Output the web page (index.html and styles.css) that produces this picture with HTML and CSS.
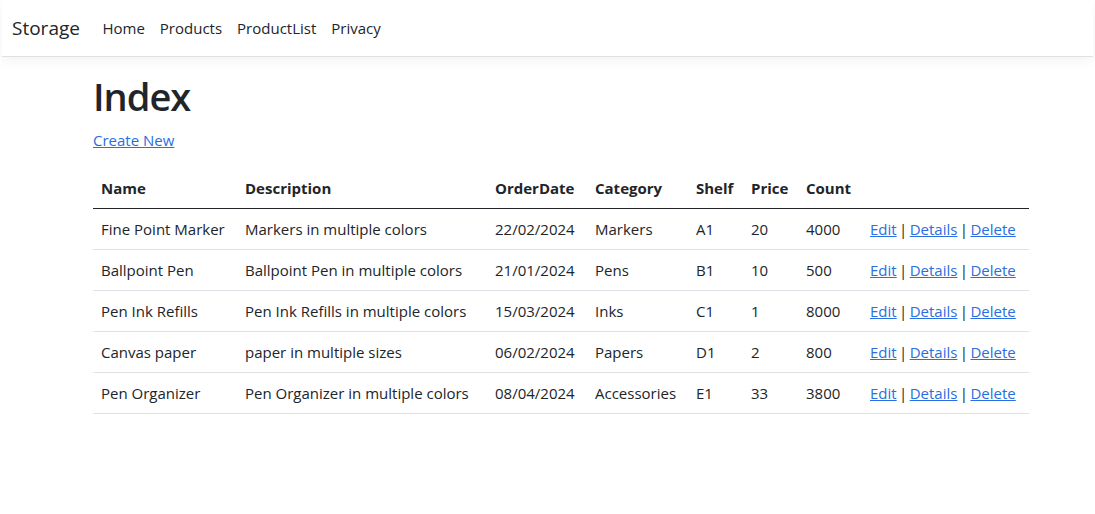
FILE: index.html
```html
<!DOCTYPE html>
<html lang="en">
<head>
<meta charset="utf-8">
<title>Index - Storage</title>
<link rel="stylesheet" href="styles.css">
</head>
<body>
<header class="navbar">
  <a class="brand" href="#">Storage</a>
  <nav class="nav">
    <a class="nav-link" href="#">Home</a>
    <a class="nav-link" href="#">Products</a>
    <a class="nav-link" href="#">ProductList</a>
    <a class="nav-link" href="#">Privacy</a>
  </nav>
</header>
<main class="container">
  <h1 class="title">Index</h1>
  <p class="create"><a href="#">Create New</a></p>
  <table class="table">
    <colgroup>
      <col class="c-name"><col class="c-desc"><col class="c-date"><col class="c-cat"><col class="c-shelf"><col class="c-price"><col class="c-count"><col class="c-act">
    </colgroup>
    <thead>
      <tr><th>Name</th><th>Description</th><th>OrderDate</th><th>Category</th><th>Shelf</th><th>Price</th><th>Count</th><th></th></tr>
    </thead>
    <tbody>
      <tr><td>Fine Point Marker</td><td>Markers in multiple colors</td><td>22/02/2024</td><td>Markers</td><td>A1</td><td>20</td><td>4000</td><td class="actions"><a href="#">Edit</a> | <a href="#">Details</a> | <a href="#">Delete</a></td></tr>
      <tr><td>Ballpoint Pen</td><td>Ballpoint Pen in multiple colors</td><td>21/01/2024</td><td>Pens</td><td>B1</td><td>10</td><td>500</td><td class="actions"><a href="#">Edit</a> | <a href="#">Details</a> | <a href="#">Delete</a></td></tr>
      <tr><td>Pen Ink Refills</td><td>Pen Ink Refills in multiple colors</td><td>15/03/2024</td><td>Inks</td><td>C1</td><td>1</td><td>8000</td><td class="actions"><a href="#">Edit</a> | <a href="#">Details</a> | <a href="#">Delete</a></td></tr>
      <tr><td>Canvas paper</td><td>paper in multiple sizes</td><td>06/02/2024</td><td>Papers</td><td>D1</td><td>2</td><td>800</td><td class="actions"><a href="#">Edit</a> | <a href="#">Details</a> | <a href="#">Delete</a></td></tr>
      <tr><td>Pen Organizer</td><td>Pen Organizer in multiple colors</td><td>08/04/2024</td><td>Accessories</td><td>E1</td><td>33</td><td>3800</td><td class="actions"><a href="#">Edit</a> | <a href="#">Details</a> | <a href="#">Delete</a></td></tr>
    </tbody>
  </table>
</main>
</body>
</html>
```
FILE: styles.css
```css
* { box-sizing: border-box; }
html, body { margin: 0; }
body {
  font-family: "Open Sans", "Noto Sans", sans-serif;
  font-size: 15px;
  line-height: 24px;
  color: #212529;
  background: #fff;
}
a { color: #2a6ee0; }

.navbar {
  display: flex;
  align-items: center;
  height: 57px;
  padding: 8px 10px;
  border-bottom: 1px solid #dee2e6;
  box-shadow: 0 4px 12px rgba(0,0,0,.05);
  margin: 0 2px 15px 2px;
}
.brand {
  font-size: 19px;
  line-height: 30px;
  color: #212529;
  text-decoration: none;
  margin-right: 15px;
}
.nav { display: flex; }
.nav-link {
  padding: 8px 7.5px;
  color: #212529;
  text-decoration: none;
}

.container {
  width: 936px;
  margin-left: 93px;
}
.title {
  font-size: 38px;
  font-weight: 600;
  letter-spacing: -1px;
  line-height: 48px;
  margin: 0 0 8px;
}
.create { margin: 0 0 16px; }

.table {
  width: 936px;
  table-layout: fixed;
  border-collapse: collapse;
}
.c-name { width: 144px; }
.c-desc { width: 250px; }
.c-date { width: 100px; }
.c-cat { width: 101px; }
.c-shelf { width: 55px; }
.c-price { width: 55px; }
.c-count { width: 64px; }
.c-act { width: 167px; }
.table th, .table td {
  padding: 8px;
  text-align: left;
  white-space: nowrap;
  border-bottom: 1px solid #dee2e6;
  vertical-align: top;
}
.table th { font-weight: 700; }
.table thead th { border-bottom: 1px solid #212529; }
.table .actions { word-spacing: -1.5px; }
```
